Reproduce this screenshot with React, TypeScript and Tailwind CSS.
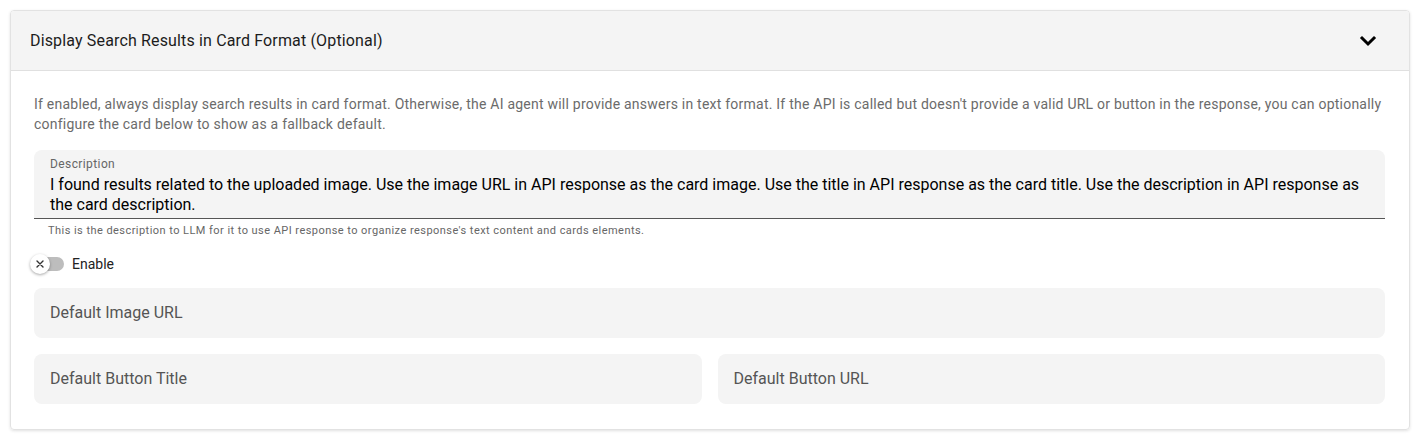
function Field({ label }: { label: string }) {
  return (
    <div className="h-[50px] flex items-center px-4 bg-[#f4f4f4] rounded-lg text-[16px] text-[#555555]">
      {label}
    </div>
  );
}

export default function App() {
  return (
    <div
      className="bg-white min-h-[442px] pt-[10px] px-[10px]"
      style={{ fontFamily: "Roboto, 'Noto Sans', sans-serif" }}
    >
      <div className="w-[1400px] border border-[#e2e2e2] rounded-[4px] shadow-[0_1px_3px_rgba(0,0,0,0.12)] overflow-hidden">
        {/* header */}
        <div className="h-[60px] flex items-center justify-between pl-[19px] pr-[32px] bg-[#f4f4f4] border-b border-[#e0e0e0]">
          <span className="text-[16px] tracking-[0.15px] text-[#1c1c1c]">
            Display Search Results in Card Format (Optional)
          </span>
          <svg width="18" height="12" viewBox="0 0 18 12" fill="none" stroke="black" strokeWidth="3" strokeLinecap="square">
            <path d="M3 3 L9 9 L15 3" />
          </svg>
        </div>

        {/* body */}
        <div className="pl-[23px] pr-6 pt-[23px] pb-[25px]">
          <p className="text-[14px] leading-5 tracking-[0.23px] text-[#6b6b6b]">
            If enabled, always display search results in card format. Otherwise, the AI agent will provide answers in text format. If the API is called but doesn't provide a valid URL or button in the response, you can optionally configure the card below to show as a fallback default.
          </p>

          <div className="mt-4 bg-[#f4f4f4] rounded-t-lg border-b border-[#555555] px-4 pt-[6px] pb-[3px]">
            <div className="text-[12px] leading-4 tracking-[0.4px] text-[#666666]">Description</div>
            <div className="mt-[3px] text-[16px] leading-5 text-black">
              I found results related to the uploaded image. Use the image URL in API response as the card image. Use the title in API response as the card title. Use the description in API response as the card description.
            </div>
          </div>
          <div className="mt-[5px] text-[11px] leading-[14px] tracking-[0.45px] text-[#666666] pl-[14px]">
            This is the description to LLM for it to use API response to organize response's text content and cards elements.
          </div>

          <div className="mt-4 -ml-1 flex items-center h-5">
            <div className="relative w-[34px] h-5 flex items-center">
              <div className="absolute left-[10px] w-[24px] h-[14px] rounded-full bg-[#bdbdbd]" />
              <div className="relative w-5 h-5 rounded-full bg-white shadow-[0_1px_3px_rgba(0,0,0,0.35)] flex items-center justify-center">
                <svg width="8" height="8" viewBox="0 0 8 8" fill="none" stroke="#333" strokeWidth="1.4" strokeLinecap="round">
                  <path d="M1 1 L7 7 M7 1 L1 7" />
                </svg>
              </div>
            </div>
            <span className="ml-2 text-[14px] text-[#222222]">Enable</span>
          </div>

          <div className="mt-[14px]">
            <Field label="Default Image URL" />
          </div>
          <div className="mt-4 grid grid-cols-2 gap-4">
            <Field label="Default Button Title" />
            <Field label="Default Button URL" />
          </div>
        </div>
      </div>
    </div>
  );
}
